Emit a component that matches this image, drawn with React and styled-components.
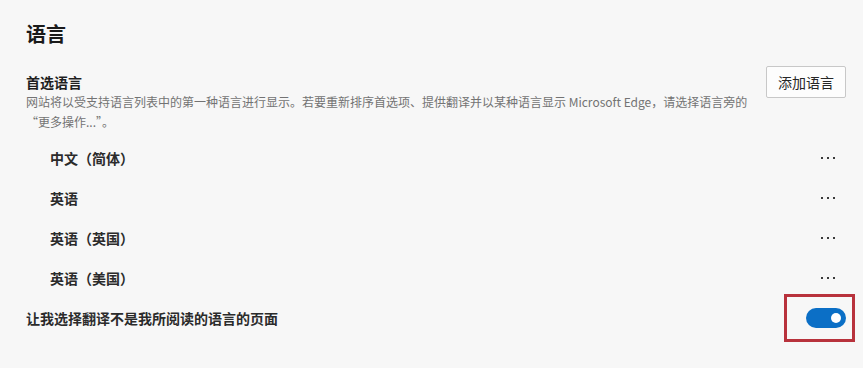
import React from "react";
import styled, { createGlobalStyle } from "styled-components";

const Global = createGlobalStyle`
  html, body { margin: 0; padding: 0; background: #f7f7f7; }
  body { font-family: "Noto Sans CJK SC", "Noto Sans", sans-serif; color: #1b1b1b; }
`;

const Page = styled.div`
  padding: 0 17px 0 26px;
  width: 820px;
  min-height: 368px;
  box-sizing: content-box;
`;

const Title = styled.h1`
  margin: 0;
  padding-top: 20px;
  font-size: 20px;
  line-height: 28px;
  font-weight: 700;
  color: #1a1a1a;
`;

const HeaderRow = styled.div`
  display: flex;
  align-items: center;
  justify-content: space-between;
  height: 32px;
  margin-top: 18px;
`;

const SubTitle = styled.h2`
  margin: 0;
  font-size: 14px;
  line-height: 20px;
  font-weight: 700;
  color: #1f1f1f;
`;

const Button = styled.button`
  height: 32px;
  width: 80px;
  padding: 0;
  border: 1px solid #c8c8c8;
  border-radius: 2px;
  background: #fdfdfd;
  font-family: inherit;
  font-size: 14px;
  color: #262626;
`;

const Desc = styled.p`
  margin: -6px 0 0;
  max-width: 760px;
  font-size: 12px;
  line-height: 20px;
  color: #737373;
`;

const List = styled.div`
  margin-top: 6px;
  display: flex;
  flex-direction: column;
`;

const Row = styled.div`
  display: flex;
  align-items: center;
  justify-content: space-between;
  height: 40px;
  padding-left: ${(p) => p.$indent || 0}px;
`;

const RowLabel = styled.span`
  font-size: 14px;
  font-weight: 700;
  color: #2b2b2b;
`;

const More = styled.span`
  display: flex;
  gap: 4px;
  margin-right: 11px;
`;

const Dot = styled.i`
  width: 2px;
  height: 2px;
  background: #3a3a3a;
`;

const ToggleWrap = styled.span`
  position: relative;
  display: inline-flex;
`;

const Highlight = styled.span`
  position: absolute;
  top: -14px;
  left: -22px;
  width: 71px;
  height: 48px;
  border: 3px solid #b8323c;
  box-sizing: border-box;
  pointer-events: none;
`;

const Toggle = styled.span`
  width: 40px;
  height: 20px;
  border-radius: 10px;
  background: #0b6fc6;
  display: flex;
  align-items: center;
  justify-content: flex-end;
  padding-right: 5px;
  box-sizing: border-box;
`;

const Knob = styled.span`
  width: 10px;
  height: 10px;
  border-radius: 50%;
  background: #fff;
`;

const languages = ["中文（简体）", "英语", "英语（英国）", "英语（美国）"];

export default function App() {
  return (
    <Page>
      <Global />
      <Title>语言</Title>
      <HeaderRow>
        <SubTitle>首选语言</SubTitle>
        <Button>添加语言</Button>
      </HeaderRow>
      <Desc>
        网站将以受支持语言列表中的第一种语言进行显示。若要重新排序首选项、提供翻译并以某种语言显示 Microsoft Edge，请选择语言旁的
        <br />
        “更多操作...”。
      </Desc>
      <List>
        {languages.map((l) => (
          <Row key={l} $indent={24}>
            <RowLabel>{l}</RowLabel>
            <More>
              <Dot />
              <Dot />
              <Dot />
            </More>
          </Row>
        ))}
        <Row>
          <RowLabel>让我选择翻译不是我所阅读的语言的页面</RowLabel>
          <ToggleWrap>
            <Toggle>
              <Knob />
            </Toggle>
            <Highlight />
          </ToggleWrap>
        </Row>
      </List>
    </Page>
  );
}
